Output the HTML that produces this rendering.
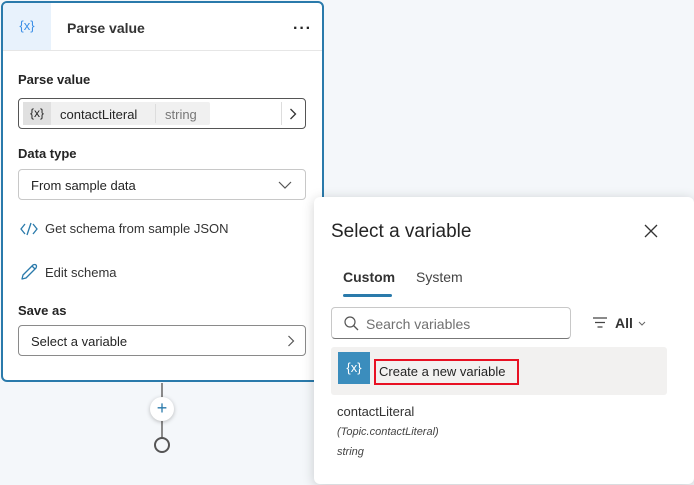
<!DOCTYPE html>
<html><head><meta charset="utf-8"><style>
*{box-sizing:border-box;margin:0;padding:0}
body{width:694px;height:485px;overflow:hidden;background:#f4f7fa;font-family:"Liberation Sans",sans-serif;color:#242424;position:relative}
.card{position:absolute;left:1px;top:1px;width:323px;height:381px;background:#fff;border:2px solid #2a7aab;border-radius:6px;overflow:hidden}
.hdr{height:48px;border-bottom:1px solid #e6e6e6;position:relative}
.hicon{position:absolute;left:0;top:0;width:48px;height:47px;background:#e8f2fc;color:#3a8ee6;font-size:13px;text-align:center;line-height:46px}
.htitle{position:absolute;left:64px;top:17px;font-size:14px;font-weight:bold;color:#333}
.dots{position:absolute;right:10px;top:21px;font-size:16px;font-weight:bold;letter-spacing:1px;line-height:10px}
.lbl{position:absolute;left:15px;font-size:13px;font-weight:bold;color:#242424}
.box{position:absolute;left:15px;width:288px;height:31px;border:1px solid #8a8a8a;border-radius:4px;background:#fff;font-size:13px}
.link{position:absolute;left:16px;font-size:13px;color:#333}
.pop{position:absolute;left:314px;top:197px;width:380px;height:287px;background:#fff;border-radius:6px;box-shadow:0 2px 12px rgba(0,0,0,.18)}
</style></head><body>
<div class="card">
 <div class="hdr"><div class="hicon">{x}</div><div class="htitle">Parse value</div><div class="dots">···</div></div>
 <div class="lbl" style="top:69px">Parse value</div>
 <div class="box" style="top:95px;border-color:#555">
  <div style="position:absolute;left:4px;top:3px;height:23px;width:187px;background:#f0f0f0;border-radius:2px"></div>
  <div style="position:absolute;left:4px;top:3px;height:23px;width:28px;background:#e0e0e0;text-align:center;line-height:23px;font-size:12px">{x}</div>
  <div style="position:absolute;left:41px;top:8px">contactLiteral</div>
  <div style="position:absolute;left:136px;top:5px;height:19px;border-left:1px solid #ddd"></div>
  <div style="position:absolute;left:146px;top:8px;color:#777">string</div>
  <div style="position:absolute;left:262px;top:3px;height:23px;border-left:1px solid #ddd"></div>
  <svg style="position:absolute;left:270px;top:9px" width="8" height="12"><path d="M1.5 1 L6.5 6 L1.5 11" stroke="#333" stroke-width="1.3" fill="none"/></svg>
 </div>
 <div class="lbl" style="top:143px">Data type</div>
 <div class="box" style="top:166px;border-color:#c8c8c8">
  <div style="position:absolute;left:12px;top:8px">From sample data</div>
  <svg style="position:absolute;left:259px;top:11px" width="14" height="8"><path d="M1 1 L7 7 L13 1" stroke="#555" stroke-width="1.2" fill="none"/></svg>
 </div>
 <svg style="position:absolute;left:17px;top:219px" width="18" height="14"><path d="M5 2 L1 7 L5 12 M13 2 L17 7 L13 12 M11 1 L7 13" stroke="#2a7aab" stroke-width="1.3" fill="none"/></svg>
 <div class="link" style="top:218px;left:42px">Get schema from sample JSON</div>
 <svg style="position:absolute;left:17px;top:260px" width="18" height="18"><path d="M2 16 L3 12 L13 2 Q15 1 16 2 Q17 3 16 5 L6 15 Z M12 3 L15 6" stroke="#2a7aab" stroke-width="1.3" fill="none" stroke-linejoin="round"/></svg>
 <div class="link" style="top:262px;left:42px">Edit schema</div>
 <div class="lbl" style="top:300px">Save as</div>
 <div class="box" style="top:322px;border-color:#8a8a8a">
  <div style="position:absolute;left:12px;top:8px">Select a variable</div>
  <svg style="position:absolute;left:268px;top:9px" width="8" height="12"><path d="M1.5 1 L6.5 6 L1.5 11" stroke="#555" stroke-width="1.2" fill="none"/></svg>
 </div>
</div>
<div style="position:absolute;left:161px;top:383px;width:2px;height:55px;background:#8a8a8a"></div>
<div style="position:absolute;left:150px;top:397px;width:24px;height:24px;border-radius:50%;background:#fff;box-shadow:0 1px 4px rgba(0,0,0,.25);text-align:center;line-height:23px;color:#2a7aab;font-size:18px">+</div>
<div style="position:absolute;left:154px;top:437px;width:16px;height:16px;border-radius:50%;border:2px solid #555;background:#f4f7fa"></div>
<div class="pop">
 <div style="position:absolute;left:17px;top:24px;font-size:19px;color:#242424">Select a variable</div>
 <svg style="position:absolute;left:330px;top:27px" width="14" height="14"><path d="M1 1 L13 13 M13 1 L1 13" stroke="#333" stroke-width="1.3"/></svg>
 <div style="position:absolute;left:29px;top:72px;font-size:14px;font-weight:bold;color:#333">Custom</div>
 <div style="position:absolute;left:29px;top:97px;width:49px;height:3px;background:#2a7aab;border-radius:2px"></div>
 <div style="position:absolute;left:102px;top:72px;font-size:14px;color:#444">System</div>
 <div style="position:absolute;left:17px;top:110px;width:240px;height:32px;border:1px solid #c8c8c8;border-bottom-color:#777;border-radius:4px">
  <svg style="position:absolute;left:12px;top:8px" width="15" height="15"><circle cx="6" cy="6" r="5" stroke="#555" stroke-width="1.2" fill="none"/><path d="M9.5 9.5 L14 14" stroke="#555" stroke-width="1.3"/></svg>
  <div style="position:absolute;left:34px;top:8px;font-size:14px;color:#707070">Search variables</div>
 </div>
 <svg style="position:absolute;left:279px;top:120px" width="14" height="11"><path d="M0 1 H14 M2 5.5 H12 M4.5 10 H9.5" stroke="#444" stroke-width="1.2"/></svg>
 <div style="position:absolute;left:301px;top:118px;font-size:14px;font-weight:bold;color:#333">All</div>
 <svg style="position:absolute;left:324px;top:124px" width="8" height="5"><path d="M1 1 L4 4 L7 1" stroke="#666" stroke-width="1" fill="none"/></svg>
 <div style="position:absolute;left:17px;top:150px;width:336px;height:48px;background:#f2f1f0;border-radius:3px"></div>
 <div style="position:absolute;left:24px;top:155px;width:32px;height:32px;background:#3b8dbd;color:#fff;text-align:center;line-height:32px;font-size:13px">{x}</div>
 <div style="position:absolute;left:60px;top:162px;width:145px;height:26px;border:2px solid #e81123;padding:3px 0 0 3px;font-size:13px;color:#242424">Create a new variable</div>
 <div style="position:absolute;left:23px;top:207px;font-size:13px;color:#333">contactLiteral</div>
 <div style="position:absolute;left:23px;top:229px;font-size:11px;font-style:italic;color:#444">(Topic.contactLiteral)</div>
 <div style="position:absolute;left:23px;top:249px;font-size:11px;font-style:italic;color:#444">string</div>
</div>
</body></html>
